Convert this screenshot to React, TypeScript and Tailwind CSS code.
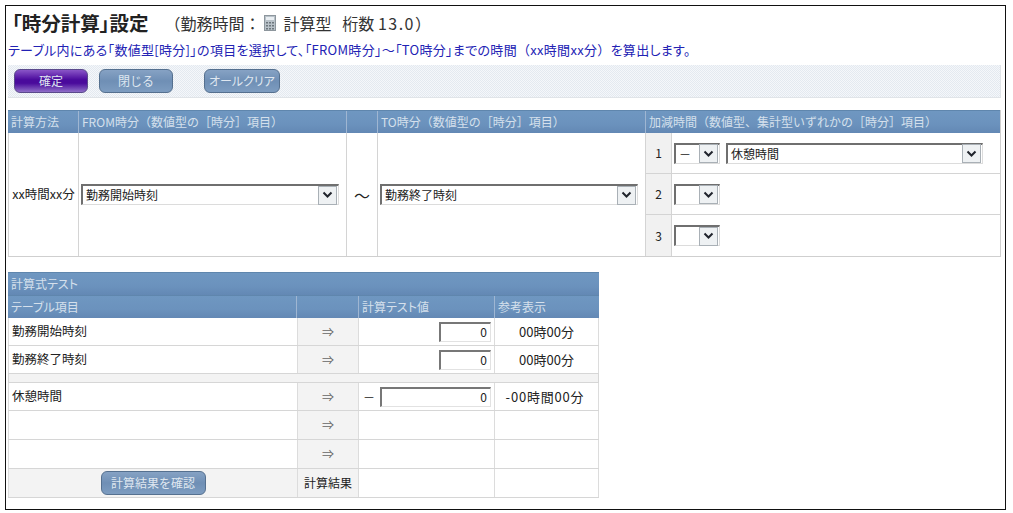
const font = { fontFamily: '"Noto Sans CJK JP", "Liberation Sans", sans-serif' };

function Chevron() {
  return (
    <span className="flex h-[19px] w-[19px] shrink-0 items-center justify-center border border-[#a9b0b6] bg-[#eef1f3]">
      <svg width="11" height="8" viewBox="0 0 11 8">
        <path d="M1.5 1.5 L5.5 5.5 L9.5 1.5" fill="none" stroke="#20242c" strokeWidth="2" />
      </svg>
    </span>
  );
}

function Select({ label, className }: { label: string; className: string }) {
  return (
    <div className={`flex h-[21px] items-center justify-between border-t-2 border-l-2 border-t-[#6f6f6f] border-l-[#6f6f6f] border-r border-b border-r-[#dcdcdc] border-b-[#dcdcdc] bg-white pl-[3px] pr-px text-[12px] leading-none text-[#222] ${className}`}>
      <span>{label}</span>
      <Chevron />
    </div>
  );
}

function TestInput({ className }: { className: string }) {
  return (
    <div className={`flex h-[20px] items-center justify-end border-t-2 border-l-2 border-t-[#777] border-l-[#777] border-r border-b border-r-[#e2e2e2] border-b-[#e2e2e2] bg-white pr-[3px] text-[12px] text-[#222] ${className}`}>
      0
    </div>
  );
}

function Btn({ label, primary, className }: { label: string; primary?: boolean; className: string }) {
  const tone = primary
    ? "border-[#5b4a8c] bg-[linear-gradient(#8a55c8,#4a0a9c_45%,#4a0a9c_60%,#8f6fc8)]"
    : "border-[#55708f] bg-[linear-gradient(#86a2c4,#6f8fb5_50%,#7d9cc0)]";
  return (
    <button className={`flex h-[24px] items-center justify-center rounded-[6px] border text-[12px] leading-none text-[#dfe7f0] ${tone} ${className}`}>
      {label}
    </button>
  );
}

const palt = "[font-feature-settings:'palt']";
const headCell = "flex items-center border-r border-[#9fb6d2] px-[3px] text-[12px] text-[#d5e0ec]";
const headBar = "border-t border-t-[#5f86ad] bg-[linear-gradient(#6f97c1,#6b92bd_60%,#6388b4)]";
const testCols = "grid grid-cols-[289px_62px_136px_104px] border-b border-[#d6d6d6] text-[12px] text-[#222]";

function TestRow({ name, value, note, height }: { name?: string; value?: React.ReactNode; note?: React.ReactNode; height: string }) {
  return (
    <div className={`${testCols} ${height}`}>
      <div className="flex items-center border-l border-[#dcdcdc] pl-[3px] text-[12.5px]">{name}</div>
      <div className="flex items-center justify-center border-x border-[#dcdcdc] bg-[#f3f3f3] text-[#666]">⇒</div>
      <div className="flex items-center border-r border-[#dcdcdc] pr-[3px]">{value}</div>
      <div className="flex items-center justify-center border-r border-[#dcdcdc] text-[13px]">{note}</div>
    </div>
  );
}

export default function App() {
  return (
    <div className="h-[513px] w-[1013px] bg-white pl-[5px] pr-[7px] pt-[5px] pb-[3px]" style={font}>
      <div className="h-[505px] w-[1001px] border border-[#111] pl-[2px] pr-[3px]">
        <div className="flex h-[33px] items-center pl-[4px] text-[#222]">
          <span className={`text-[19.5px] font-bold leading-none ${palt}`}>「時分計算」設定</span>
          <span className="ml-[16px] flex items-center text-[16px] leading-none text-[#333]">
            （勤務時間：
            <svg width="12" height="16" viewBox="0 0 12 16" className="ml-[3px] mr-[8px]">
              <rect x="0.5" y="0.5" width="11" height="15" fill="#b9c2c9" stroke="#8d969d" />
              <rect x="2" y="2" width="8" height="3" fill="#e9eef2" />
              <path d="M2 7h2v1.5H2zM5 7h2v1.5H5zM8 7h2v1.5H8zM2 10h2v1.5H2zM5 10h2v1.5H5zM8 10h2v1.5H8zM2 13h2v1.5H2zM5 13h2v1.5H5zM8 13h2v1.5H8z" fill="#6d767d" />
            </svg>
            計算型&nbsp;&nbsp;&nbsp;桁数&nbsp;<span className="tracking-[1.5px]">13.0</span>）
          </span>
        </div>
        <p className={`mt-px h-[20px] whitespace-nowrap text-[13px] leading-[20px] tracking-[0.3px] text-[#2222b4] ${palt}`}>
          テーブル内にある「数値型[時分]」の項目を選択して、「FROM時分」～「TO時分」までの時間<span className="[font-feature-settings:normal]">（xx時間xx分）</span>を算出します。
        </p>
        <div className="mt-[5px] flex h-[33px] w-[993px] items-center gap-[11px] border-b border-r border-[#e0e4e8] bg-[#eef2f6] bg-[repeating-conic-gradient(#e3e9f0_0_25%,#f5f7fa_0_50%)] bg-[length:2px_2px] pl-[6px]">
          <Btn label="確定" primary className="w-[74px]" />
          <Btn label="閉じる" className="w-[74px]" />
          <Btn label="オールクリア" className={`ml-[20px] w-[76px] ${palt}`} />
        </div>

        <div className="mt-[12px] w-[993px] border-b border-r border-[#cfcfcf]">
          <div className={`grid h-[23px] grid-cols-[71px_268px_31px_268px_355px] ${headBar}`}>
            <div className={headCell}>計算方法</div>
            <div className={headCell}>FROM時分（数値型の［時分］項目）</div>
            <div className={headCell} />
            <div className={headCell}>TO時分（数値型の［時分］項目）</div>
            <div className={`${headCell} border-r-0`}>加減時間（数値型、集計型いずれかの［時分］項目）</div>
          </div>
          <div className="grid h-[123px] grid-cols-[71px_268px_31px_268px_26px_1fr] text-[12px] text-[#222]">
            <div className="flex items-center justify-center border-x border-[#d4d4d4] text-[12.5px]">xx時間xx分</div>
            <div className="flex items-center border-r border-[#d4d4d4] pl-[2px]">
              <Select label="勤務開始時刻" className="w-[258px]" />
            </div>
            <div className="flex items-center justify-center border-r border-[#d4d4d4] text-[16px]">～</div>
            <div className="flex items-center border-r border-[#d4d4d4] pl-[2px]">
              <Select label="勤務終了時刻" className="w-[258px]" />
            </div>
            <div className="col-span-2 grid grid-rows-3">
              {[1, 2, 3].map((n) => (
                <div key={n} className="flex items-center border-b border-[#d4d4d4] last:border-b-0">
                  <div className="flex h-full w-[26px] items-center justify-center border-r border-[#d4d4d4] bg-[#f1f1f1]">{n}</div>
                  <Select label={n === 1 ? "－" : ""} className="ml-[2px] w-[46px]" />
                  {n === 1 && <Select label="休憩時間" className="ml-[6px] w-[257px]" />}
                </div>
              ))}
            </div>
          </div>
        </div>

        <div className="mt-[15px] w-[591px]">
          <div className={`flex h-[23px] items-center px-[3px] text-[12px] text-[#d5e0ec] ${headBar} ${palt}`}>計算式テスト</div>
          <div className={`grid h-[23px] grid-cols-[289px_62px_136px_104px] ${headBar}`}>
            <div className={`${headCell} ${palt}`}>テーブル項目</div>
            <div className={headCell} />
            <div className={`${headCell} ${palt}`}>計算テスト値</div>
            <div className={`${headCell} border-r-0 ${palt}`}>参考表示</div>
          </div>
          <TestRow height="h-[28px]" name="勤務開始時刻" value={<TestInput className="ml-auto w-[52px]" />} note="00時00分" />
          <TestRow height="h-[28px]" name="勤務終了時刻" value={<TestInput className="ml-auto w-[52px]" />} note="00時00分" />
          <div className="h-[9px] border-x border-b border-[#d6d6d6] bg-[#f3f3f3]" />
          <TestRow
            height="h-[28px]"
            name="休憩時間"
            value={
              <>
                <span className="ml-[4px] mr-auto">－</span>
                <TestInput className="w-[111px]" />
              </>
            }
            note={<span className="-ml-[3px] tracking-[0.8px]">-00時間00分</span>}
          />
          <TestRow height="h-[29px]" />
          <TestRow height="h-[29px]" />
          <div className={`${testCols} h-[29px]`}>
            <div className="flex items-center justify-center border-l border-[#dcdcdc] bg-[#f3f3f3]">
              <Btn label="計算結果を確認" className="w-[105px]" />
            </div>
            <div className="flex items-center justify-center border-x border-[#dcdcdc] bg-[#f3f3f3]">計算結果</div>
            <div className="border-r border-[#dcdcdc]" />
            <div className="border-r border-[#dcdcdc]" />
          </div>
        </div>
      </div>
    </div>
  );
}
